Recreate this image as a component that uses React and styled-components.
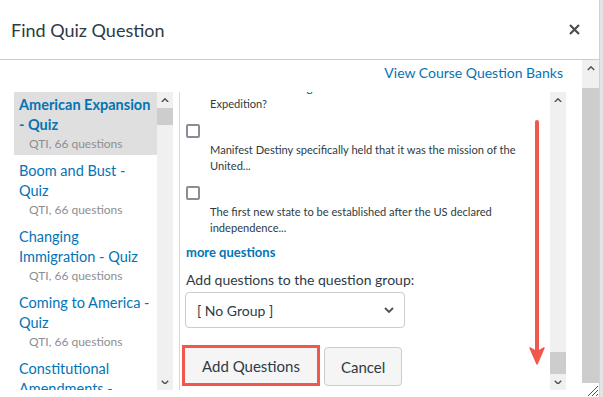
import styled, { createGlobalStyle } from 'styled-components';

const GlobalStyle = createGlobalStyle`
  html, body {
    margin: 0;
    padding: 0;
    background: #ffffff;
    overflow: hidden;
  }
  body {
    font-family: Lato, "Noto Sans", sans-serif;
    color: #2d3b45;
  }
`;

const Page = styled.div`
  display: flex;
  width: 603px;
  height: 397px;
`;

const Dialog = styled.div`
  display: flex;
  flex-direction: column;
  width: 599px;
  height: 397px;
  background: #ffffff;
`;

const PageEdge = styled.div`
  flex: 1;
  background: #e4e4e4;
  border-left: 1px solid #d2d2d2;
`;

const Header = styled.div`
  display: flex;
  align-items: center;
  justify-content: space-between;
  height: 59px;
  padding: 0 17px 0 11px;
  border-bottom: 1px solid #c7cdd1;
  flex-shrink: 0;
`;

const Title = styled.h1`
  margin: 0;
  font-size: 18px;
  font-weight: 400;
  color: #2d3b45;
`;

const CloseButton = styled.button`
  display: flex;
  align-items: center;
  justify-content: center;
  width: 16px;
  height: 16px;
  padding: 0;
  border: none;
  background: none;
`;

const Body = styled.div`
  flex: 1;
  display: flex;
  min-height: 0;
`;

const Content = styled.div`
  width: 582px;
  padding: 0 16px 0 14px;
  box-sizing: border-box;
  display: flex;
  flex-direction: column;
`;

const TopRow = styled.div`
  display: flex;
  justify-content: flex-end;
  height: 32px;
  padding: 4px 3px 0 0;
  box-sizing: border-box;
`;

const BankLink = styled.a`
  font-size: 14px;
  line-height: 18px;
  color: #0374b5;
  text-decoration: none;
`;

const Panes = styled.div`
  display: flex;
  height: 298px;
`;

const LeftPane = styled.div`
  display: flex;
  width: 159px;
  flex-shrink: 0;
`;

const Divider = styled.div`
  width: 1px;
  margin-left: 6px;
  background: #d4d8db;
`;

const RightPane = styled.div`
  position: relative;
  display: flex;
  flex: 1;
`;

const BankList = styled.div`
  flex: 1;
  overflow: hidden;
`;

const BankItem = styled.div`
  padding: 3px 5px 2px;
  margin-bottom: 3px;
  background: ${(p) => (p.$selected ? '#dfdfdf' : 'transparent')};
`;

const BankName = styled.div`
  font-size: 14.5px;
  line-height: 20px;
  white-space: nowrap;
  font-weight: ${(p) => (p.$selected ? 700 : 400)};
  color: #0374b5;
`;

const BankMeta = styled.div`
  padding-left: 10px;
  font-size: 12px;
  line-height: 18px;
  color: #8b8f93;
`;

const ScrollTrack = styled.div`
  display: flex;
  flex-direction: column;
  width: ${(p) => p.$width}px;
  flex-shrink: 0;
  background: #f0f0f0;
`;

const ScrollButton = styled.div`
  display: flex;
  align-items: center;
  justify-content: center;
  height: ${(p) => p.$size}px;
  flex-shrink: 0;
`;

const TrackArea = styled.div`
  flex: 1;
  min-height: 0;
`;

const Thumb = styled.div`
  margin-top: ${(p) => p.$top}px;
  height: ${(p) => p.$height}px;
  background: #cdcdcd;
`;

const Corner = styled.div`
  display: flex;
  align-items: flex-end;
  justify-content: flex-end;
  height: 14px;
  background: #ffffff;
`;

const QuestionArea = styled.div`
  flex: 1;
  overflow: hidden;
  padding-left: 6px;
`;

const QuestionText = styled.div`
  padding-left: 24px;
  margin-top: ${(p) => p.$offset || 0}px;
  font-size: 11.1px;
  line-height: 16px;
  color: #2d3b45;
`;

const QuestionItem = styled.div`
  margin-top: 12px;
`;

const CheckBox = styled.div`
  width: 10px;
  height: 10px;
  border: 2px solid #8d8b98;
  border-radius: 2px;
  margin-bottom: 4px;
`;

const MoreLink = styled.a`
  display: block;
  margin-top: 7px;
  font-size: 13px;
  line-height: 18px;
  font-weight: 700;
  color: #0374b5;
  text-decoration: none;
`;

const GroupLabel = styled.div`
  margin-top: 10px;
  font-size: 14px;
  line-height: 18px;
  color: #2d3b45;
`;

const Select = styled.div`
  display: flex;
  align-items: center;
  justify-content: space-between;
  width: 220px;
  height: 36px;
  margin: 3px 0 0 -1px;
  padding: 0 10px 0 11px;
  box-sizing: border-box;
  border: 1px solid #c7cdd1;
  border-radius: 4px;
  font-size: 14px;
  color: #2d3b45;
`;

const ButtonRow = styled.div`
  display: flex;
  align-items: flex-end;
  gap: 4px;
  margin: 17px 0 0 -4px;
`;

const Button = styled.button`
  height: ${(p) => (p.$highlight ? 41 : 39)}px;
  padding: 0 ${(p) => (p.$highlight ? 17 : 16)}px;
  border: ${(p) => (p.$highlight ? '3px solid #f1584c' : '1px solid #c7cdd1')};
  border-radius: ${(p) => (p.$highlight ? 0 : 4)}px;
  background: #f5f5f5;
  font-family: Lato, "Noto Sans", sans-serif;
  font-size: 15px;
  color: #2d3b45;
`;

const ArrowOverlay = styled.svg`
  position: absolute;
  left: 347px;
  top: 26px;
`;

const Chevron = ({ up, size = 8 }) => (
  <svg width={size} height={size * 0.6} viewBox="0 0 10 6">
    <path
      d={up ? 'M1 5 L5 1 L9 5' : 'M1 1 L5 5 L9 1'}
      fill="none"
      stroke="#505050"
      strokeWidth="1.8"
    />
  </svg>
);

const Scrollbar = ({ width = 16, button = 16, thumbTop, thumbHeight, corner }) => (
  <ScrollTrack $width={width}>
    <ScrollButton $size={button}>
      <Chevron up />
    </ScrollButton>
    <TrackArea>
      <Thumb $top={thumbTop} $height={thumbHeight} />
    </TrackArea>
    {corner ? (
      <Corner>
        <svg width="14" height="14" viewBox="0 0 14 14">
          <path d="M3 13 L13 3 M7 13 L13 7 M11 13 L13 11" stroke="#555" strokeWidth="1" />
        </svg>
      </Corner>
    ) : (
      <ScrollButton $size={button}>
        <Chevron />
      </ScrollButton>
    )}
  </ScrollTrack>
);

const banks = [
  { name: ['American Expansion', '- Quiz'], selected: true },
  { name: ['Boom and Bust -', 'Quiz'] },
  { name: ['Changing', 'Immigration - Quiz'] },
  { name: ['Coming to America -', 'Quiz'] },
  { name: ['Constitutional', 'Amendments -...'] },
];

const questions = [
  ['Manifest Destiny specifically held that it was the mission of the', 'United...'],
  ['The first new state to be established after the US declared', 'independence...'],
];

const App = () => (
  <>
    <GlobalStyle />
    <Page>
      <Dialog>
        <Header>
          <Title>Find Quiz Question</Title>
          <CloseButton aria-label="Close">
            <svg width="11" height="11" viewBox="0 0 11 11">
              <path d="M1 1 L10 10 M10 1 L1 10" stroke="#4a4f54" strokeWidth="2.2" />
            </svg>
          </CloseButton>
        </Header>
        <Body>
          <Content>
            <TopRow>
              <BankLink href="#">View Course Question Banks</BankLink>
            </TopRow>
            <Panes>
              <LeftPane>
                <BankList>
                  {banks.map((bank) => (
                    <BankItem key={bank.name.join(' ')} $selected={bank.selected}>
                      {bank.name.map((line) => (
                        <BankName key={line} $selected={bank.selected}>{line}</BankName>
                      ))}
                      <BankMeta>QTI, 66 questions</BankMeta>
                    </BankItem>
                  ))}
                </BankList>
                <Scrollbar thumbTop={0} thumbHeight={17} />
              </LeftPane>
              <Divider />
              <RightPane>
                <QuestionArea>
                  <QuestionText $offset={-12}>
                    What was the main goal of the Lewis and Clark
                    <br />
                    Expedition?
                  </QuestionText>
                  {questions.map((q) => (
                    <QuestionItem key={q[0]}>
                      <CheckBox />
                      <QuestionText>
                        {q[0]}
                        <br />
                        {q[1]}
                      </QuestionText>
                    </QuestionItem>
                  ))}
                  <MoreLink href="#">more questions</MoreLink>
                  <GroupLabel>Add questions to the question group:</GroupLabel>
                  <Select>
                    <span>[ No Group ]</span>
                    <Chevron size={10} />
                  </Select>
                  <ButtonRow>
                    <Button $highlight>Add Questions</Button>
                    <Button>Cancel</Button>
                  </ButtonRow>
                </QuestionArea>
                <Scrollbar thumbTop={244} thumbHeight={22} />
                <ArrowOverlay width="20" height="250" viewBox="0 0 20 250">
                  <line x1="10" y1="4" x2="10" y2="236" stroke="#f1584c" strokeWidth="4" strokeLinecap="round" />
                  <path d="M3 230 L10 246 L17 230 L10 234 Z" fill="#f1584c" stroke="#f1584c" strokeWidth="1.5" strokeLinejoin="round" />
                </ArrowOverlay>
              </RightPane>
            </Panes>
          </Content>
          <Scrollbar width={17} button={17} thumbTop={11} thumbHeight={295} corner />
        </Body>
      </Dialog>
      <PageEdge />
    </Page>
  </>
);

export default App;
